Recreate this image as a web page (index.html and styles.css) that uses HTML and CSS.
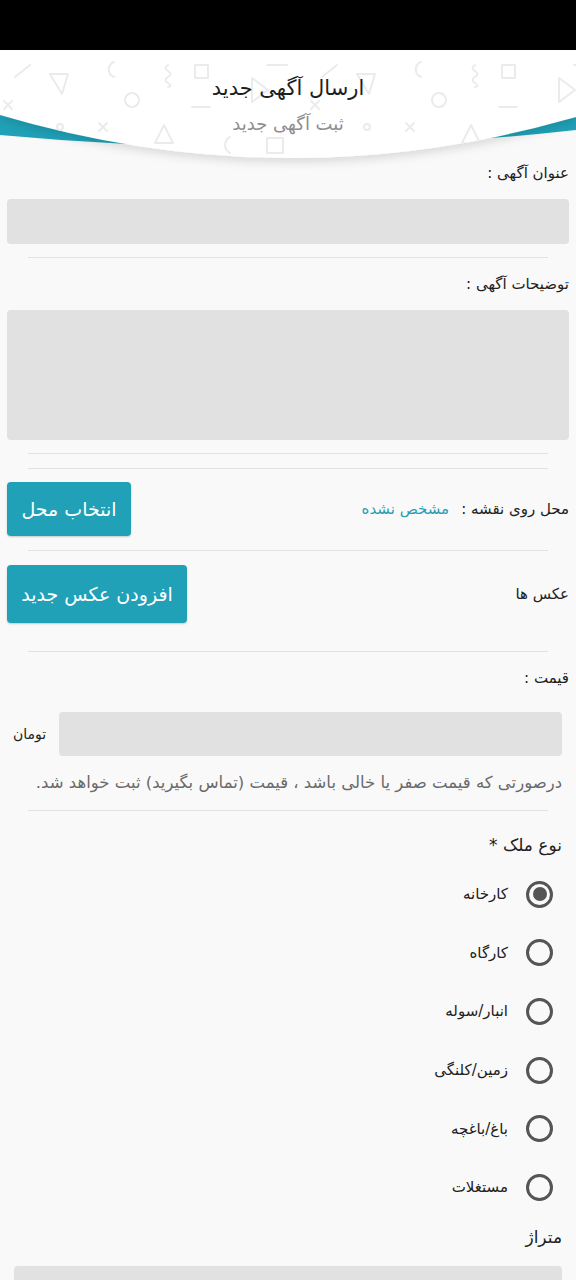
FILE: index.html
```html
<!DOCTYPE html>
<html lang="fa" dir="rtl">
<head>
<meta charset="utf-8">
<title>ارسال آگهی جدید</title>
<link rel="stylesheet" href="styles.css">
</head>
<body>
<div class="statusbar"></div>
<header class="header">
  <svg class="header-bg" width="576" height="120" viewBox="0 0 576 120" aria-hidden="true">
    <defs>
      <filter id="sh" x="-10%" y="-20%" width="120%" height="150%">
        <feDropShadow dx="0" dy="4" stdDeviation="5" flood-color="#000" flood-opacity="0.13"/>
      </filter>
      <pattern id="pat" x="0" y="0" width="307" height="120" patternUnits="userSpaceOnUse">
        <g fill="none" stroke="#ebebeb" stroke-width="2" stroke-linecap="round" stroke-linejoin="round">
          <line x1="15" y1="27" x2="30" y2="15"/>
          <polygon points="50,24 68,24 62,44"/>
          <path d="M114,12 A8,8 0 0 0 114,27"/>
          <path d="M168,15 q-5,3 0,6 q5,3 0,6 q-5,3 0,6 q5,3 0,4"/>
          <rect x="195" y="15" width="13" height="13"/>
          <circle cx="132" cy="50" r="7"/>
          <path d="M99,73 l8,8 M107,73 l-8,8"/>
          <path d="M4,51 l8,8 M12,51 l-8,8"/>
          <circle cx="60" cy="77" r="3"/>
          <polygon points="164,75 173,93 155,93"/>
          <line x1="192" y1="57" x2="210" y2="57"/>
          <path d="M230,87 A9,9 0 0 0 230,103"/>
          <rect x="267" y="88" width="16" height="15"/>
          <line x1="267" y1="15" x2="287" y2="15"/>
          <polygon points="252,28 268,40 252,52"/>
        </g>
      </pattern>
    </defs>
    <path d="M0,0 H576 V80 Q288,112 0,85 Z" fill="#20a1b7"/>
    <path d="M0,0 H576 V67 Q288,150 0,65 Z" fill="#ffffff" filter="url(#sh)"/>
    <path d="M0,0 H576 V67 Q288,150 0,65 Z" fill="url(#pat)"/>
  </svg>
  <h1 class="title">ارسال آگهی جدید</h1>
  <p class="subtitle">ثبت آگهی جدید</p>
</header>

<main class="form">
  <div class="label">عنوان آگهی :</div>
  <div class="input"></div>
  <hr class="divider">

  <div class="label">توضیحات آگهی :</div>
  <div class="input textarea"></div>
  <hr class="divider divider-a">
  <hr class="divider divider-b">

  <div class="row map-row">
    <div class="row-label">محل روی نقشه :</div>
    <div class="row-value">مشخص نشده</div>
    <button class="btn btn-map">انتخاب محل</button>
  </div>
  <hr class="divider divider-c">

  <div class="row photo-row">
    <div class="row-label">عکس ها</div>
    <button class="btn btn-photo">افزودن عکس جدید</button>
  </div>
  <hr class="divider">

  <div class="label">قیمت :</div>
  <div class="price-row">
    <div class="input price-input"></div>
    <span class="unit">تومان</span>
  </div>
  <p class="note">درصورتی که قیمت صفر یا خالی باشد ، قیمت (تماس بگیرید) ثبت خواهد شد.</p>
  <hr class="divider divider-d">

  <div class="section-title">نوع ملک *</div>
  <ul class="radios">
    <li class="radio checked"><span class="dot"></span><span class="radio-text">کارخانه</span></li>
    <li class="radio"><span class="dot"></span><span class="radio-text">کارگاه</span></li>
    <li class="radio"><span class="dot"></span><span class="radio-text">انبار/سوله</span></li>
    <li class="radio"><span class="dot"></span><span class="radio-text">زمین/کلنگی</span></li>
    <li class="radio"><span class="dot"></span><span class="radio-text">باغ/باغچه</span></li>
    <li class="radio"><span class="dot"></span><span class="radio-text">مستغلات</span></li>
  </ul>

  <div class="section-title area-title">متراژ</div>
  <div class="input area-input"></div>
</main>
</body>
</html>
```

FILE: styles.css
```css
html {
  scrollbar-width: none;
}
html::-webkit-scrollbar { display: none; }

body {
  margin: 0;
  background: #f9f9f9;
  font-family: "DejaVu Sans", "Noto Sans", sans-serif;
  color: #212121;
  direction: rtl;
}

.statusbar {
  height: 50px;
  background: #000;
}

.header {
  position: relative;
  height: 110px;
  text-align: center;
}

.header-bg {
  position: absolute;
  top: 0;
  left: 0;
  display: block;
  overflow: visible;
}

.title {
  position: relative;
  margin: 0;
  padding-top: 24px;
  font-size: 21px;
  line-height: 28px;
  font-weight: normal;
  color: #1e1e1e;
}

.subtitle {
  position: relative;
  margin: 9px 0 0;
  font-size: 18px;
  line-height: 26px;
  color: #8e8e8e;
}

.form {
  padding: 0 7px;
}

.label {
  font-size: 15px;
  line-height: 26px;
  height: 26px;
}

.input {
  height: 45px;
  margin-top: 13px;
  background: #e1e1e1;
  border-radius: 4px;
}

.textarea {
  height: 130px;
}

.divider {
  border: 0;
  height: 1px;
  background: #e2e2e2;
  margin: 13px 21px;
}

.divider-a {
  margin-top: 13px;
}

.divider-b {
  margin-top: 14px;
  margin-bottom: 13px;
}

.divider-c {
  margin-top: 14px;
  margin-bottom: 14px;
}

.divider-d {
  margin-top: 14px;
}

.row {
  display: flex;
  align-items: center;
}

.row-label {
  font-size: 15px;
}

.row-value {
  margin-right: 12px;
  font-size: 15px;
  color: #2a9db3;
}

.btn {
  margin-right: auto;
  border: 0;
  border-radius: 4px;
  background: #20a1b7;
  color: #fff;
  font-family: inherit;
  font-size: 19px;
  box-shadow: 0 1px 2px rgba(0, 0, 0, 0.2);
}

.btn-map {
  width: 124px;
  height: 54px;
}

.btn-photo {
  width: 180px;
  height: 58px;
}

.photo-row {
  margin-bottom: 28px;
}

.price-row {
  display: flex;
  align-items: center;
  gap: 13px;
  margin-top: 21px;
  padding: 0 7px 0 6px;
}

.price-input {
  flex: 1;
  margin-top: 0;
  height: 44px;
}

.unit {
  font-size: 14px;
}

.note {
  margin: 14px 7px 0;
  font-size: 16.5px;
  line-height: 26px;
  color: #6a6a6a;
}

.section-title {
  padding-right: 7px;
  margin-top: 21px;
  font-size: 17px;
  line-height: 26px;
}

.radios {
  list-style: none;
  margin: 7px 0 0;
  padding: 0;
}

.radio {
  display: flex;
  align-items: center;
  height: 58.6px;
  padding-right: 16px;
}

.dot {
  position: relative;
  box-sizing: border-box;
  width: 27px;
  height: 27px;
  border: 3px solid #555;
  border-radius: 50%;
}

.radio.checked .dot::after {
  content: "";
  position: absolute;
  top: 3.5px;
  left: 3.5px;
  width: 14px;
  height: 14px;
  border-radius: 50%;
  background: #555;
}

.radio-text {
  margin-right: 18px;
  font-size: 15px;
}

.area-title {
  margin-top: 7px;
}

.area-input {
  margin: 16px 7px 0;
}
```
